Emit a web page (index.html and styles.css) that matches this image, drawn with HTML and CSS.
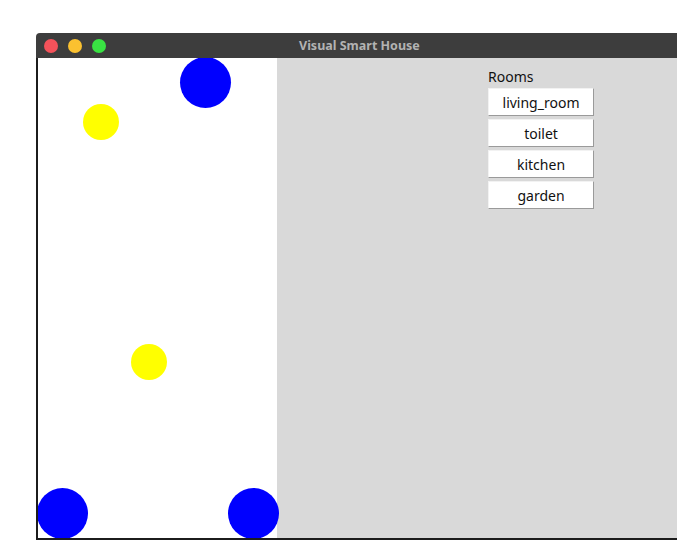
FILE: index.html
```html
<!DOCTYPE html>
<html>
<head>
<meta charset="utf-8">
<link rel="stylesheet" href="styles.css">
</head>
<body>
<div class="window">
  <div class="titlebar">
    <div class="lights">
      <span class="light red"></span>
      <span class="light yellow"></span>
      <span class="light green"></span>
    </div>
    <div class="title">Visual Smart House</div>
  </div>
  <div class="content">
    <div class="canvas">
      <span class="dot blue" style="left:142px;top:-1px"></span>
      <span class="dot yellow-dot" style="left:45px;top:46px"></span>
      <span class="dot yellow-dot" style="left:93px;top:286px"></span>
      <span class="dot blue" style="left:-1px;top:430px"></span>
      <span class="dot blue" style="left:190px;top:430px"></span>
    </div>
    <div class="panel">
      <div class="rooms">
        <div class="rooms-label">Rooms</div>
        <button class="room-btn">living_room</button>
        <button class="room-btn">toilet</button>
        <button class="room-btn">kitchen</button>
        <button class="room-btn">garden</button>
      </div>
    </div>
  </div>
</div>
</body>
</html>
```
FILE: styles.css
```css
html, body {
  margin: 0;
  padding: 0;
  background: #ffffff;
  overflow: hidden;
}
body {
  width: 677px;
  height: 540px;
  font-family: "Noto Sans", "DejaVu Sans", sans-serif;
}
.window {
  margin: 33px 0 0 36px;
  width: 660px;
  position: relative;
}
.titlebar {
  height: 25px;
  background: #3d3d3d;
  border-radius: 4px 4px 0 0;
  display: flex;
  align-items: center;
  position: relative;
  z-index: 2;
}
.lights {
  display: flex;
  gap: 10px;
  padding-left: 8px;
}
.light {
  width: 14px;
  height: 14px;
  border-radius: 50%;
  display: block;
}
.red { background: #f4525a; }
.yellow { background: #fbc130; }
.green { background: #39e243; }
.title {
  position: absolute;
  left: 263px;
  top: 0;
  line-height: 25px;
  font-family: "Noto Sans", "DejaVu Sans", sans-serif;
  font-weight: bold;
  font-size: 12.5px;
  color: #b3b3b3;
}
.content {
  display: flex;
  height: 480px;
  border-left: 2px solid #1c1c1c;
  border-bottom: 2px solid #1c1c1c;
  overflow: hidden;
}
.canvas {
  width: 239px;
  flex: none;
  background: #ffffff;
  position: relative;
  z-index: 1;
}
.dot {
  position: absolute;
  border-radius: 50%;
  display: block;
}
.blue {
  width: 51px;
  height: 51px;
  background: #0000ff;
}
.yellow-dot {
  width: 36px;
  height: 36px;
  background: #ffff00;
}
.panel {
  flex: 1;
  background: #d9d9d9;
  padding: 10px 0 0 211px;
}
.rooms {
  display: flex;
  flex-direction: column;
  width: 106px;
  gap: 3px;
}
.rooms-label {
  font-size: 14px;
  color: #111;
  line-height: 17px;
  margin-bottom: 0;
}
.room-btn {
  height: 28px;
  width: 106px;
  background: #ffffff;
  border: 1px solid;
  border-color: #f2f2f2 #9a9a9a #9a9a9a #f2f2f2;
  font-family: "Noto Sans", "DejaVu Sans", sans-serif;
  font-size: 14px;
  color: #111;
  padding: 0;
  margin: 0;
}
```
